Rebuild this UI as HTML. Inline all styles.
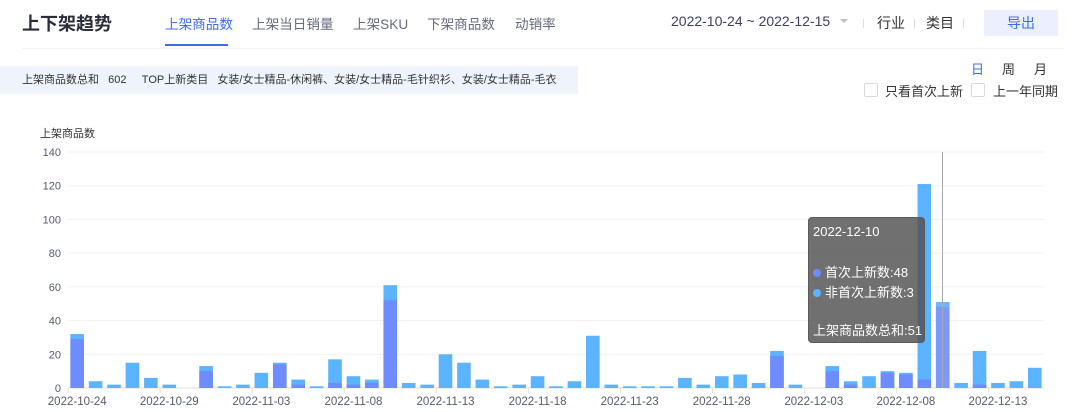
<!DOCTYPE html>
<html><head><meta charset="utf-8"><style>
*{margin:0;padding:0;box-sizing:border-box}
body{width:1080px;height:412px;background:#fff;font-family:"Liberation Sans","Noto Sans CJK SC",sans-serif;position:relative;overflow:hidden;color:#333}
.a{position:absolute;white-space:nowrap}
.tab{font-size:13.6px;color:#666a80;top:13px}
.cb{position:absolute;width:14px;height:14px;border:1px solid #d9d9d9;border-radius:2px;background:#fff}
</style></head><body>
<div class="a" style="left:22px;top:10px;font-size:18px;font-weight:bold;color:#2b2e3a">上下架趋势</div>
<div class="a tab" style="left:165px;color:#3a6df0">上架商品数</div>
<div class="a" style="left:165px;top:44px;width:63px;height:2px;background:#3a6df0"></div>
<div class="a tab" style="left:252px">上架当日销量</div>
<div class="a tab" style="left:353px">上架SKU</div>
<div class="a tab" style="left:427px">下架商品数</div>
<div class="a tab" style="left:515px">动销率</div>
<div class="a" style="left:671px;top:13px;font-size:14px;color:#3d4060">2022-10-24 ~ 2022-12-15</div>
<div class="a" style="left:840px;top:19px;width:0;height:0;border-left:4px solid transparent;border-right:4px solid transparent;border-top:4px solid #c0c0c8"></div>
<div class="a" style="left:863px;top:19px;width:1px;height:9px;background:#ddd"></div>
<div class="a" style="left:877px;top:13px;font-size:14px;color:#333">行业</div>
<div class="a" style="left:914px;top:19px;width:1px;height:9px;background:#ddd"></div>
<div class="a" style="left:926px;top:13px;font-size:14px;color:#333">类目</div>
<div class="a" style="left:963px;top:19px;width:1px;height:9px;background:#ddd"></div>
<div class="a" style="left:984px;top:10px;width:74px;height:26px;background:#eceffd;border-radius:2px;color:#3a6df0;font-size:14px;text-align:center;line-height:26px">导出</div>
<div class="a" style="left:22px;top:48px;width:1042px;height:1px;background:#f2f2f4"></div>
<div class="a" style="left:0;top:66px;width:578px;height:28px;background:#eff3fc"></div>
<div class="a" style="left:22px;top:72px;font-size:11px;color:#333;line-height:16px">上架商品数总和&nbsp;&nbsp;&nbsp;602&nbsp;&nbsp;&nbsp;&nbsp;&nbsp;TOP上新类目&nbsp;&nbsp;&nbsp;女装/女士精品-休闲裤、女装/女士精品-毛针织衫、女装/女士精品-毛衣</div>
<div class="a" style="left:971px;top:59px;font-size:13px;color:#3a6df0">日</div>
<div class="a" style="left:1002px;top:59px;font-size:13px;color:#333">周</div>
<div class="a" style="left:1034px;top:59px;font-size:13px;color:#333">月</div>
<div class="cb" style="left:864px;top:83px"></div>
<div class="a" style="left:885px;top:81px;font-size:13px;color:#333">只看首次上新</div>
<div class="cb" style="left:971px;top:83px"></div>
<div class="a" style="left:993px;top:81px;font-size:13px;color:#333">上一年同期</div>
<div class="a" style="left:40px;top:125px;font-size:11px;color:#333">上架商品数</div>
<svg class="a" style="left:0;top:0" width="1080" height="412" id="c"></svg>
<div class="a" style="left:808px;top:217px;width:117px;height:126px;background:rgba(80,80,80,.82);border-radius:4px;color:#fff;font-size:13px;border:1px solid rgba(90,90,90,.9)">
<div class="a" style="left:4px;top:6px">2022-12-10</div>
<div class="a" style="left:4px;top:44px"><span style="display:inline-block;width:8px;height:8px;border-radius:50%;background:#6e8bff;margin-right:4px"></span>首次上新数:48</div>
<div class="a" style="left:4px;top:64px"><span style="display:inline-block;width:8px;height:8px;border-radius:50%;background:#5cb3ff;margin-right:4px"></span>非首次上新数:3</div>
<div class="a" style="left:4px;top:102px">上架商品数总和:51</div>
</div>
<script>
var T=[32,4,2,15,6,2,0,13,1,2,9,15,5,1,17,7,5,61,3,2,20,15,5,1,2,7,1,4,31,2,1,1,1,6,2,7,8,3,22,2,0,13,4,7,10,9,121,51,3,22,3,4,12];
var F={0:29,7:10,11:14,12:2,14:3,15:2,16:3,17:52,38:19,41:10,42:2,44:9,45:8,46:5,47:48,49:2};
var s='',y0=388,k=236/140,x0=68,p=976/53;
for(var i=0;i<=7;i++){var y=y0-i*20*k;s+='<line x1="68" x2="1044" y1="'+y+'" y2="'+y+'" stroke="'+(i?'#f1f1f3':'#e0e0e6')+'"/>';s+='<text x="61" y="'+(y+4)+'" text-anchor="end" font-size="11" fill="#555a70">'+(i*20)+'</text>';}
var D=['2022-10-24','2022-10-29','2022-11-03','2022-11-08','2022-11-13','2022-11-18','2022-11-23','2022-11-28','2022-12-03','2022-12-08','2022-12-13'];
for(var j=0;j<11;j++){var cx=x0+(j*5+.5)*p;s+='<text x="'+cx+'" y="405" text-anchor="middle" font-size="11.5" fill="#555a70">'+D[j]+'</text>';s+='<line x1="'+(x0+j*5*p)+'" x2="'+(x0+j*5*p)+'" y1="388" y2="393" stroke="#e0e0e6"/>';}
for(i=0;i<53;i++){var cx=x0+(i+.5)*p,w=13.6,h=T[i]*k,f=(F[i]||0)*k;if(!h)continue;var hv=i==47;
s+='<rect x="'+(cx-w/2)+'" y="'+(y0-h)+'" width="'+w+'" height="'+h+'" fill="'+(hv?'#66b8ff':'#5cb3ff')+'"/>';
if(f)s+='<rect x="'+(cx-w/2)+'" y="'+(y0-f)+'" width="'+w+'" height="'+f+'" fill="'+(hv?'#7b98ff':'#6e8bff')+'"/>';}
s+='<line x1="942.5" x2="942.5" y1="152" y2="388" stroke="#aaa"/>';
document.getElementById('c').innerHTML=s;
</script>
</body></html>
